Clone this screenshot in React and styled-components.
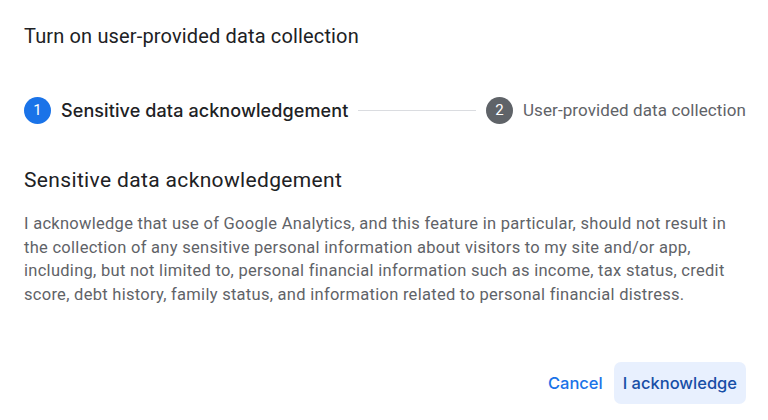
import React from "react";
import styled, { createGlobalStyle } from "styled-components";

const Global = createGlobalStyle`
  html, body { margin: 0; padding: 0; background: #fff; }
  body { font-family: Roboto, "Noto Sans", Arial, sans-serif; -webkit-font-smoothing: antialiased; }
`;

const Dialog = styled.div`
  width: 768px;
  height: 420px;
  box-sizing: border-box;
  padding: 23px 22px 16px 24px;
  display: flex;
  flex-direction: column;
  background: #fff;
`;

const Title = styled.h1`
  margin: 0;
  font-size: 20px;
  line-height: 26px;
  font-weight: 400;
  letter-spacing: 0.15px;
  color: #202124;
`;

const Stepper = styled.div`
  display: flex;
  align-items: center;
  margin-top: 47px;
  height: 28px;
`;

const Step = styled.div`
  display: flex;
  align-items: center;
  gap: 10px;
  flex: none;
`;

const StepCircle = styled.div`
  width: 27px;
  height: 27px;
  border-radius: 50%;
  background: ${(p) => (p.$active ? "#1a73e8" : "#5f6368")};
  color: #fff;
  font-size: 15px;
  display: flex;
  align-items: center;
  justify-content: center;
  flex: none;
`;

const StepLabel = styled.span`
  font-family: ${(p) => (p.$active ? "Inter, Roboto, sans-serif" : "Roboto, sans-serif")};
  font-size: ${(p) => (p.$active ? "18px" : "17px")};
  font-weight: ${(p) => (p.$active ? 500 : 400)};
  color: ${(p) => (p.$active ? "#202124" : "#5f6368")};
  letter-spacing: 0.1px;
  white-space: nowrap;
`;

const Connector = styled.div`
  flex: 1;
  height: 1px;
  background: #dadce0;
  margin: 0 10px;
`;

const Heading = styled.h2`
  margin: 42px 0 0 0;
  font-size: 21px;
  line-height: 28px;
  font-weight: 400;
  letter-spacing: 0.35px;
  color: #202124;
`;

const Body = styled.p`
  margin: 18px 0 0 0;
  font-size: 16.5px;
  line-height: 23.5px;
  color: #5f6368;
  letter-spacing: 0.28px;
  max-width: 715px;
`;

const Actions = styled.div`
  margin-top: auto;
  display: flex;
  justify-content: flex-end;
  align-items: center;
  gap: 5px;
`;

const Button = styled.button`
  border: none;
  font-family: Inter, Roboto, "Noto Sans", Arial, sans-serif;
  font-size: 16.5px;
  font-weight: 500;
  height: 42px;
  padding: 0 ${(p) => (p.$tonal ? "9px" : "6px")};
  border-radius: 7px;
  cursor: pointer;
  background: ${(p) => (p.$tonal ? "#e8f0fe" : "transparent")};
  color: ${(p) => (p.$tonal ? "#174ea6" : "#1a73e8")};
`;

export default function App() {
  return (
    <>
      <Global />
      <Dialog>
        <Title>Turn on user-provided data collection</Title>
        <Stepper>
          <Step>
            <StepCircle $active>1</StepCircle>
            <StepLabel $active>Sensitive data acknowledgement</StepLabel>
          </Step>
          <Connector />
          <Step>
            <StepCircle>2</StepCircle>
            <StepLabel>User-provided data collection</StepLabel>
          </Step>
        </Stepper>
        <Heading>Sensitive data acknowledgement</Heading>
        <Body>
          I acknowledge that use of Google Analytics, and this feature in particular, should not result in
          the collection of any sensitive personal information about visitors to my site and/or app,
          including, but not limited to, personal financial information such as income, tax status, credit
          score, debt history, family status, and information related to personal financial distress.
        </Body>
        <Actions>
          <Button>Cancel</Button>
          <Button $tonal>I acknowledge</Button>
        </Actions>
      </Dialog>
    </>
  );
}
